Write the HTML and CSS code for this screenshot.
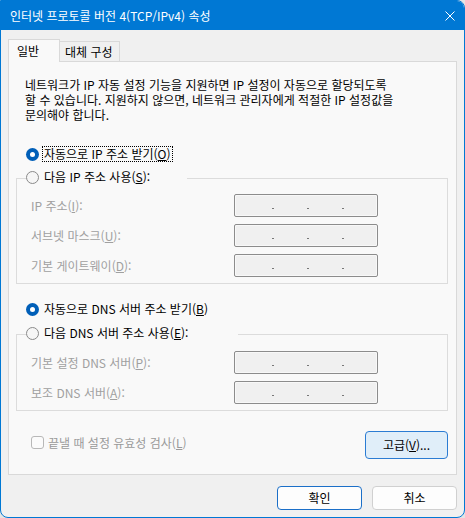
FILE: index.html
```html
<!DOCTYPE html>
<html lang="ko">
<head>
<meta charset="utf-8">
<link rel="stylesheet" href="styles.css">
</head>
<body>
<div class="window">
  <div class="titlebar">
    <span class="title">인터넷 프로토콜 버전 4(TCP/IPv4) 속성</span>
    <svg class="close" width="10" height="10" viewBox="0 0 10 10"><path d="M0.5 0.5 L9.5 9.5 M9.5 0.5 L0.5 9.5" stroke="#fff" stroke-width="1" fill="none"/></svg>
  </div>
  <div class="content">
    <div class="tabs">
      <div class="tab active">일반</div>
      <div class="tab">대체 구성</div>
    </div>
    <div class="panel">
      <p class="desc">네트워크가 IP 자동 설정 기능을 지원하면 IP 설정이 자동으로 할당되도록<br>할 수 있습니다. 지원하지 않으면, 네트워크 관리자에게 적절한 IP 설정값을<br>문의해야 합니다.</p>

      <div class="radio-row first">
        <span class="radio on"></span><span class="rtext focus">자동으로 IP 주소 받기(<u>O</u>)</span>
      </div>

      <fieldset class="group group-ip">
        <legend class="legend legend-ip"><span class="radio"></span><span class="rtext">다음 IP 주소 사용(<u>S</u>):</span></legend>
        <div class="field-row">
          <span class="flabel">IP 주소(<u>I</u>):</span>
          <div class="ipbox"><span class="dot"></span><span class="dot"></span><span class="dot"></span></div>
        </div>
        <div class="field-row">
          <span class="flabel">서브넷 마스크(<u>U</u>):</span>
          <div class="ipbox"><span class="dot"></span><span class="dot"></span><span class="dot"></span></div>
        </div>
        <div class="field-row">
          <span class="flabel">기본 게이트웨이(<u>D</u>):</span>
          <div class="ipbox"><span class="dot"></span><span class="dot"></span><span class="dot"></span></div>
        </div>
      </fieldset>

      <div class="radio-row second">
        <span class="radio on"></span><span class="rtext">자동으로 DNS 서버 주소 받기(<u>B</u>)</span>
      </div>

      <fieldset class="group group-dns">
        <legend class="legend legend-dns"><span class="radio"></span><span class="rtext">다음 DNS 서버 주소 사용(<u>E</u>):</span></legend>
        <div class="field-row">
          <span class="flabel">기본 설정 DNS 서버(<u>P</u>):</span>
          <div class="ipbox"><span class="dot"></span><span class="dot"></span><span class="dot"></span></div>
        </div>
        <div class="field-row">
          <span class="flabel">보조 DNS 서버(<u>A</u>):</span>
          <div class="ipbox"><span class="dot"></span><span class="dot"></span><span class="dot"></span></div>
        </div>
      </fieldset>

      <div class="bottom-row">
        <label class="check"><span class="checkbox"></span><span class="ctext">끝낼 때 설정 유효성 검사(<u>L</u>)</span></label>
        <button class="btn btn-adv">고급(<u>V</u>)...</button>
      </div>
    </div>
    <div class="dialog-buttons">
      <button class="btn btn-default">확인</button>
      <button class="btn">취소</button>
    </div>
  </div>
</div>
</body>
</html>
```

FILE: styles.css
```css
* { box-sizing: border-box; }
html, body { margin: 0; padding: 0; }
body {
  width: 465px;
  height: 518px;
  background: #e4e4e4;
  font-family: "Noto Sans CJK KR", "Malgun Gothic", sans-serif;
  font-size: 12px;
  color: #000;
}
u { text-decoration: underline; text-underline-offset: 1px; }

.window {
  width: 465px;
  height: 518px;
  border: 1px solid #0078d4;
  border-radius: 0 8px 8px 8px;
  background: #f0f0f0;
  overflow: hidden;
  display: flex;
  flex-direction: column;
}

.titlebar {
  height: 29px;
  flex: none;
  background: #0078d4;
  color: #fff;
  display: flex;
  align-items: center;
  justify-content: space-between;
  padding: 0 9px;
}
.title { font-size: 12px; line-height: 16px; }
.close { display: block; }

.content {
  flex: 1;
  display: flex;
  flex-direction: column;
  padding: 9px 7px 0 7px;
}

.tabs {
  display: flex;
  align-items: flex-end;
  height: 22px;
  position: relative;
  z-index: 2;
}
.tab {
  height: 20px;
  line-height: 19px;
  border: 1px solid #d9d9d9;
  border-bottom: none;
  background: #f0f0f0;
  padding-left: 5px;
  width: 60px;
  border-left: none;
}
.tab.active {
  height: 23px;
  margin-bottom: -1px;
  width: 52px;
  padding-left: 8px;
  line-height: 22px;
  background: #f9f9f9;
  border-left: 1px solid #d9d9d9;
}

.panel {
  height: 414px;
  border: 1px solid #d9d9d9;
  background: #f9f9f9;
  display: flex;
  flex-direction: column;
}

.desc {
  margin: 15px 0 0 16px;
  line-height: 15px;
}

.radio-row {
  display: flex;
  align-items: center;
  height: 16px;
  margin-left: 17px;
}
.radio-row.first { margin-top: 24px; }
.radio-row.second { margin-top: 17px; margin-left: 17px; }

.radio {
  width: 13px;
  height: 13px;
  border-radius: 50%;
  border: 1px solid #8a8a8a;
  background: #f6f6f6;
  flex: none;
  display: flex;
  align-items: center;
  justify-content: center;
  margin-right: 3px;
}
.radio.on {
  border: none;
  background: #005fb8;
}
.radio.on::after {
  content: "";
  width: 5px;
  height: 5px;
  border-radius: 50%;
  background: #fff;
}
.rtext {
  line-height: 14px;
  padding: 0 1px;
  border: 1px solid transparent;
  white-space: nowrap;
}
.rtext.focus { border: 1px dotted #000; }

.group {
  margin: 7px 8px 0 7px;
  padding: 6px 0 6px 0;
  border: 1px solid #dcdcdc;
  min-width: 0;
  display: flex;
  flex-direction: column;
  gap: 7px;
}
.group-dns { margin-top: 8px; padding-top: 7px; }

.legend {
  display: flex;
  align-items: center;
  padding: 0 0 3px 0;
  margin-left: 9px;
  height: 19px;
}
.legend-ip { width: 161px; }
.legend-dns { width: 212px; }

.field-row {
  display: grid;
  grid-template-columns: 203px 144px;
  align-items: center;
  height: 23px;
  margin-left: 14px;
}
.flabel { color: #a0a0a0; white-space: nowrap; }

.ipbox {
  height: 23px;
  border: 1px solid #8c8c8c;
  border-radius: 2px;
  background: #f0f0f0;
  box-shadow: inset 0 0 0 1px #f8f8f8;
  display: flex;
  justify-content: space-evenly;
  align-items: flex-start;
  padding: 13px 0 0 4px;
}
.dot {
  width: 2px;
  height: 1px;
  background: #777;
}

.bottom-row {
  margin: 20px 8px 0 7px;
  display: flex;
  justify-content: space-between;
  align-items: flex-start;
}
.check {
  display: flex;
  align-items: center;
  height: 16px;
  margin-top: 3px;
  margin-left: 15px;
  color: #9a9a9a;
}
.checkbox {
  width: 13px;
  height: 13px;
  border: 1px solid #b8b8b8;
  border-radius: 3px;
  background: #fbfbfb;
  margin-right: 4px;
  flex: none;
}

.btn {
  font-family: inherit;
  font-size: 12px;
  color: #000;
  background: #fdfdfd;
  border: 1px solid #d0d0d0;
  border-radius: 4px;
  width: 85px;
  height: 24px;
  padding: 0;
  line-height: 20px;
}
.btn-adv {
  width: 83px;
  height: 28px;
  background: #e0eef9;
  border-color: #2b7cd3;
}
.btn-default { border-color: #1b6fc8; }

.dialog-buttons {
  display: flex;
  justify-content: flex-end;
  gap: 10px;
  margin-top: 11px;
}
```
